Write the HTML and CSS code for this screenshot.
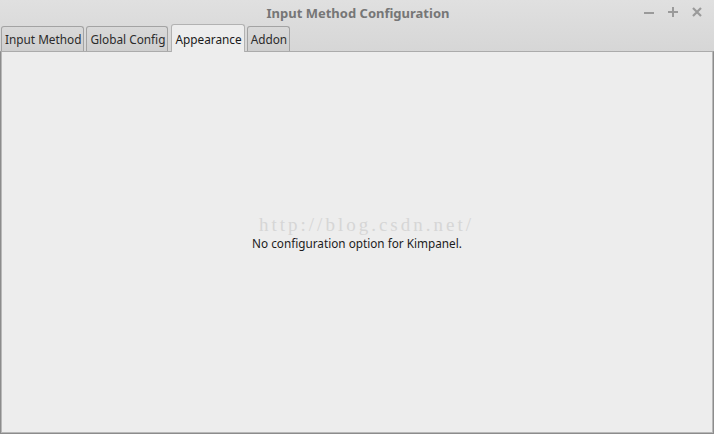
FILE: index.html
```html
<!DOCTYPE html>
<html>
<head>
<meta charset="utf-8">
<link rel="stylesheet" href="styles.css">
</head>
<body>
<div class="window">
  <div class="titlebar">
    <div class="title">Input Method Configuration</div>
    <div class="controls">
      <svg class="ctl" width="12" height="12" viewBox="0 0 12 12"><rect x="1" y="6" width="10" height="2" fill="#9a9a9a"/></svg>
      <svg class="ctl" width="12" height="12" viewBox="0 0 12 12"><rect x="1" y="5" width="10" height="2" fill="#9a9a9a"/><rect x="5" y="1" width="2" height="10" fill="#9a9a9a"/></svg>
      <svg class="ctl" width="12" height="12" viewBox="0 0 12 12"><path d="M2 2 L10 10 M10 2 L2 10" stroke="#9a9a9a" stroke-width="2.2"/></svg>
    </div>
  </div>
  <div class="tabs">
    <div class="tab">Input Method</div>
    <div class="tab">Global Config</div>
    <div class="tab active">Appearance</div>
    <div class="tab">Addon</div>
  </div>
  <div class="panel">
    <div class="msg">No configuration option for Kimpanel.</div>
    <div class="watermark">http://blog.csdn.net/</div>
  </div>
</div>
</body>
</html>
```
FILE: styles.css
```css
html, body {
  margin: 0;
  padding: 0;
}
body {
  width: 714px;
  height: 434px;
  overflow: hidden;
  font-family: "Noto Sans", "Open Sans", sans-serif;
}
.window {
  display: flex;
  flex-direction: column;
  height: 434px;
  background: linear-gradient(#e0e0e0, #d6d6d6 52px);
}
.titlebar {
  position: relative;
  height: 24px;
  display: flex;
  align-items: center;
  justify-content: center;
}
.title {
  font-weight: bold;
  font-size: 13px;
  color: #767676;
  padding-top: 1px;
  padding-left: 2px;
}
.controls {
  position: absolute;
  right: 11px;
  top: 6px;
  display: flex;
  gap: 12px;
}
.ctl {
  display: block;
}
.tabs {
  display: flex;
  align-items: flex-end;
  height: 28px;
  padding-left: 1px;
  gap: 2px;
  position: relative;
  z-index: 1;
}
.tab {
  height: 25px;
  box-sizing: border-box;
  border: 1px solid #a3a3a3;
  border-bottom: none;
  border-radius: 3px 3px 0 0;
  background: linear-gradient(#d9d9d9, #cfcfcf);
  font-size: 11.8px;
  color: #2b2b2b;
  padding: 0 2px 0 3px;
  display: flex;
  align-items: center;
  margin-bottom: 1px;
}
.tab.active {
  height: 28px;
  background: #ededed;
  border-color: #b2b2b2;
  padding: 0 2px 0 3px;
  margin-left: 1px;
  margin-bottom: 0;
  color: #1a1a1a;
}
.panel {
  flex: 1;
  position: relative;
  margin-top: -1px;
  background: #ededed;
  border: 1px solid #8c8c8c;
  border-top-color: #ababab;
  box-shadow: inset 1px 0 #b8b8b8, inset -1px 0 #b8b8b8, inset 0 -1px #b8b8b8;
  display: flex;
  align-items: center;
  justify-content: center;
}
.msg {
  font-size: 11.75px;
  color: #1c1c1c;
}
.watermark {
  position: absolute;
  left: 258px;
  top: 162px;
  font-family: "Liberation Serif", serif;
  font-size: 19px;
  letter-spacing: 3px;
  color: #d6d6d6;
}
```
